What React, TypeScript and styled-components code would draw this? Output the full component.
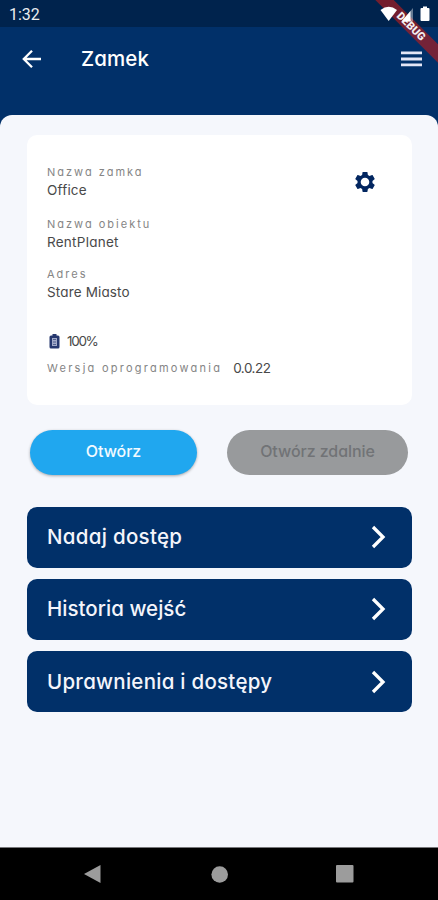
import React from "react";
import styled, { createGlobalStyle } from "styled-components";

const navy = "#013069";

const GlobalStyle = createGlobalStyle`
  * { box-sizing: border-box; }
  body { margin: 0; background: ${navy}; }
  button { border: 0; padding: 0; font: inherit; background: none; }
  svg { display: block; flex: none; }
`;

const Screen = styled.div`
  position: relative;
  display: flex;
  flex-direction: column;
  height: 900px;
  overflow: hidden;
  background: ${navy};
  font-family: Inter, "Open Sans", sans-serif;
  font-feature-settings: "cv11";
  color: #fff;
`;

const StatusBar = styled.div`
  display: flex;
  align-items: center;
  justify-content: space-between;
  height: 27px;
  padding: 1px 8px 0 9px;
  background: #00234d;
`;

const Clock = styled.span`
  padding-top: 1px;
  font: 400 16px/20px Roboto, sans-serif;
  color: #e9ecef;
`;

const StatusIcons = styled.div`
  position: relative;
  z-index: 2;
  display: flex;
  align-items: center;
`;

const DebugBanner = styled.div`
  position: absolute;
  z-index: 1;
  top: 20px;
  left: 351px;
  width: 120px;
  height: 13px;
  transform: rotate(45deg);
  background: rgba(183, 28, 28, 0.63);
  font: 900 11px/13px Roboto, sans-serif;
  text-align: center;
  color: #f3eef0;
`;

const Header = styled.header`
  display: flex;
  align-items: center;
  height: 64px;
  padding: 0 16px 0 20px;
`;

const Title = styled.h1`
  flex: 1;
  margin: 0 0 0 37px;
  font-size: 20.5px;
  font-weight: 500;
  line-height: 28px;
  letter-spacing: 0.1px;
`;

const Content = styled.main`
  display: flex;
  flex: 1;
  flex-direction: column;
  margin-top: 24px;
  padding: 20px 26px 0 27px;
  border-radius: 12px 12px 0 0;
  background: #f5f7fc;
`;

const Card = styled.section`
  display: flex;
  justify-content: space-between;
  height: 270px;
  padding: 28px 35.5px 0 20px;
  border-radius: 10px;
  background: #fff;
`;

const Details = styled.div`
  display: flex;
  flex-direction: column;
`;

const Field = styled.div<{ $gap: number }>`
  display: flex;
  flex-direction: column;
  margin-bottom: ${(p) => p.$gap}px;
`;

const Label = styled.span<{ $spacing?: number }>`
  font-size: 11px;
  line-height: 18px;
  letter-spacing: ${(p) => p.$spacing ?? 2}px;
  color: #858585;
`;

const Value = styled.span<{ $spacing?: number }>`
  font-size: 13.5px;
  line-height: 18px;
  letter-spacing: ${(p) => p.$spacing ?? 0.2}px;
  color: #494949;
`;

const Battery = styled.div`
  display: flex;
  align-items: center;
  gap: 7px;
  height: 18px;
  margin-bottom: 9px;
  padding-left: 2px;
`;

const Version = styled.div`
  display: flex;
  gap: 11px;
`;

const Settings = styled.button`
  align-self: flex-start;
  margin-top: 7px;
`;

const Actions = styled.div`
  display: flex;
  justify-content: space-between;
  margin: 25px 4px 0 3px;
`;

const Pill = styled.button<{ $muted?: boolean }>`
  width: ${(p) => (p.$muted ? 181 : 167)}px;
  height: 45px;
  padding-bottom: 3px;
  border-radius: 23px;
  background: ${(p) => (p.$muted ? "#989a9c" : "#20a7ef")};
  box-shadow: ${(p) => (p.$muted ? "none" : "0 1px 3px rgba(0, 0, 0, 0.32)")};
  font-size: 16px;
  font-weight: 500;
  letter-spacing: -0.06px;
  color: ${(p) => (p.$muted ? "#717376" : "#f2faff")};
`;

const Menu = styled.nav`
  display: flex;
  flex-direction: column;
  gap: 11.4px;
  margin-top: 31.5px;
`;

const MenuItem = styled.button`
  display: flex;
  align-items: center;
  justify-content: space-between;
  height: 61px;
  padding: 0 26px 0 20px;
  border-radius: 10px;
  background: ${navy};
  color: #f4f5fb;
`;

const MenuLabel = styled.span<{ $spacing: number }>`
  padding-bottom: 1px;
  font-size: 20.5px;
  font-weight: 500;
  letter-spacing: ${(p) => p.$spacing}px;
`;

const SystemNav = styled.footer`
  display: flex;
  align-items: center;
  justify-content: space-between;
  height: 53px;
  padding: 0 84px;
  border-top: 1px solid #77777a;
  background: #000;
`;

const Chevron = () => (
  <svg width="15" height="24" viewBox="0 0 15 24" fill="none" stroke="#fff" strokeWidth="3.3">
    <path d="M2 2 12 12 2 22" />
  </svg>
);

const menu = [
  { label: "Nadaj dostęp", spacing: 0.3 },
  { label: "Historia wejść", spacing: 0.03 },
  { label: "Uprawnienia i dostępy", spacing: 0.26 },
];

export default function App() {
  return (
    <>
      <GlobalStyle />
      <Screen>
        <StatusBar>
          <Clock>1:32</Clock>
          <StatusIcons>
            <svg width="50" height="18" viewBox="0 0 50 18" fill="#fff">
              <path d="M.5 5Q8.700-1.500 17 5L8.700 16Z" />
              <path d="M21.500 16.500 33 3V16.500Z" opacity=".4" />
              <path d="M21.500 16.500 30.500 6V16.500Z" />
              <path d="M43 1.500h4v1.500h1.500q1 0 1 1V15q0 1-1 1h-7q-1 0-1-1V4q0-1 1-1H43Z" />
            </svg>
          </StatusIcons>
        </StatusBar>
        <DebugBanner>DEBUG</DebugBanner>
        <Header>
          <svg width="24" height="24" viewBox="0 0 24 24" fill="none" stroke="#fff" strokeWidth="2.300">
            <path d="M21 12H4.500M12 3.800 3.800 12 12 20.200" />
          </svg>
          <Title>Zamek</Title>
          <svg width="21" height="16" viewBox="0 0 21 16" fill="#e4e6f6">
            <path d="M0 .5h21V3.300H0ZM0 6.600h21V9.400H0ZM0 12.500h21V15.300H0Z" />
          </svg>
        </Header>
        <Content>
          <Card>
            <Details>
              <Field $gap={16}>
                <Label>Nazwa zamka</Label>
                <Value>Office</Value>
              </Field>
              <Field $gap={14}>
                <Label>Nazwa obiektu</Label>
                <Value $spacing={0.25}>RentPlanet</Value>
              </Field>
              <Field $gap={31}>
                <Label>Adres</Label>
                <Value $spacing={0.15}>Stare Miasto</Value>
              </Field>
              <Battery>
                <svg width="11" height="15" viewBox="0 0 11 15">
                  <path d="M3.500 0h4v1.500H9q1.500 0 1.500 1.500V13q0 1.500-1.500 1.500H2Q.5 14.500.5 13V3Q.5 1.500 2 1.500h1.500Z" fill="#26386f" />
                  <path d="M3 4h5v8H3Z" fill="#a3abc9" />
                  <path d="M4 5.500h3M4 8h3M4 10.500h3" stroke="#52618f" />
                </svg>
                <Value $spacing={-1.3}>100%</Value>
              </Battery>
              <Version>
                <Label $spacing={2.25}>Wersja oprogramowania</Label>
                <Value $spacing={-0.5}>0.0.22</Value>
              </Version>
            </Details>
            <Settings aria-label="Ustawienia">
              <svg width="24" height="24" viewBox="0 0 24 24" fill="#022660">
                <path d="M19.430 12.980c.04-.32.070-.64.070-.98s-.03-.66-.07-.98l2.110-1.650c.19-.15.240-.42.120-.64l-2-3.460c-.12-.22-.39-.3-.61-.22l-2.490 1c-.52-.4-1.080-.73-1.690-.98l-.38-2.650C14.460 2.180 14.250 2 14 2h-4c-.25 0-.46.180-.49.420l-.38 2.650c-.61.250-1.170.590-1.690.980l-2.490-1c-.23-.09-.49 0-.61.220l-2 3.460c-.13.220-.07.490.120.640l2.110 1.650c-.04.320-.07.650-.07.980s.030.660.070.980l-2.110 1.650c-.19.150-.24.420-.12.640l2 3.460c.12.220.390.300.610.220l2.490-1c.52.400 1.080.730 1.690.980l.38 2.650c.03.240.240.420.490.420h4c.25 0 .46-.18.490-.42l.38-2.650c.61-.25 1.170-.59 1.690-.98l2.490 1c.23.090.490 0 .61-.22l2-3.460c.12-.22.070-.49-.12-.64ZM12 16.300a4.300 4.300 0 1 1 0-8.600 4.300 4.300 0 0 1 0 8.600Z" />
              </svg>
            </Settings>
          </Card>
          <Actions>
            <Pill>Otwórz</Pill>
            <Pill $muted>Otwórz zdalnie</Pill>
          </Actions>
          <Menu>
            {menu.map((item) => (
              <MenuItem key={item.label}>
                <MenuLabel $spacing={item.spacing}>{item.label}</MenuLabel>
                <Chevron />
              </MenuItem>
            ))}
          </Menu>
        </Content>
        <SystemNav>
          <svg width="17" height="18" viewBox="0 0 17 18" fill="#9c9c9c"><path d="M0 9 16.500 0V18Z" /></svg>
          <svg width="18" height="17" viewBox="0 0 18 17" fill="#9c9c9c"><circle cx="9.700" cy="8.500" r="8.300" /></svg>
          <svg width="18" height="18" viewBox="0 0 18 18" fill="#9c9c9c"><rect width="17.500" height="17.500" rx="1" /></svg>
        </SystemNav>
      </Screen>
    </>
  );
}
